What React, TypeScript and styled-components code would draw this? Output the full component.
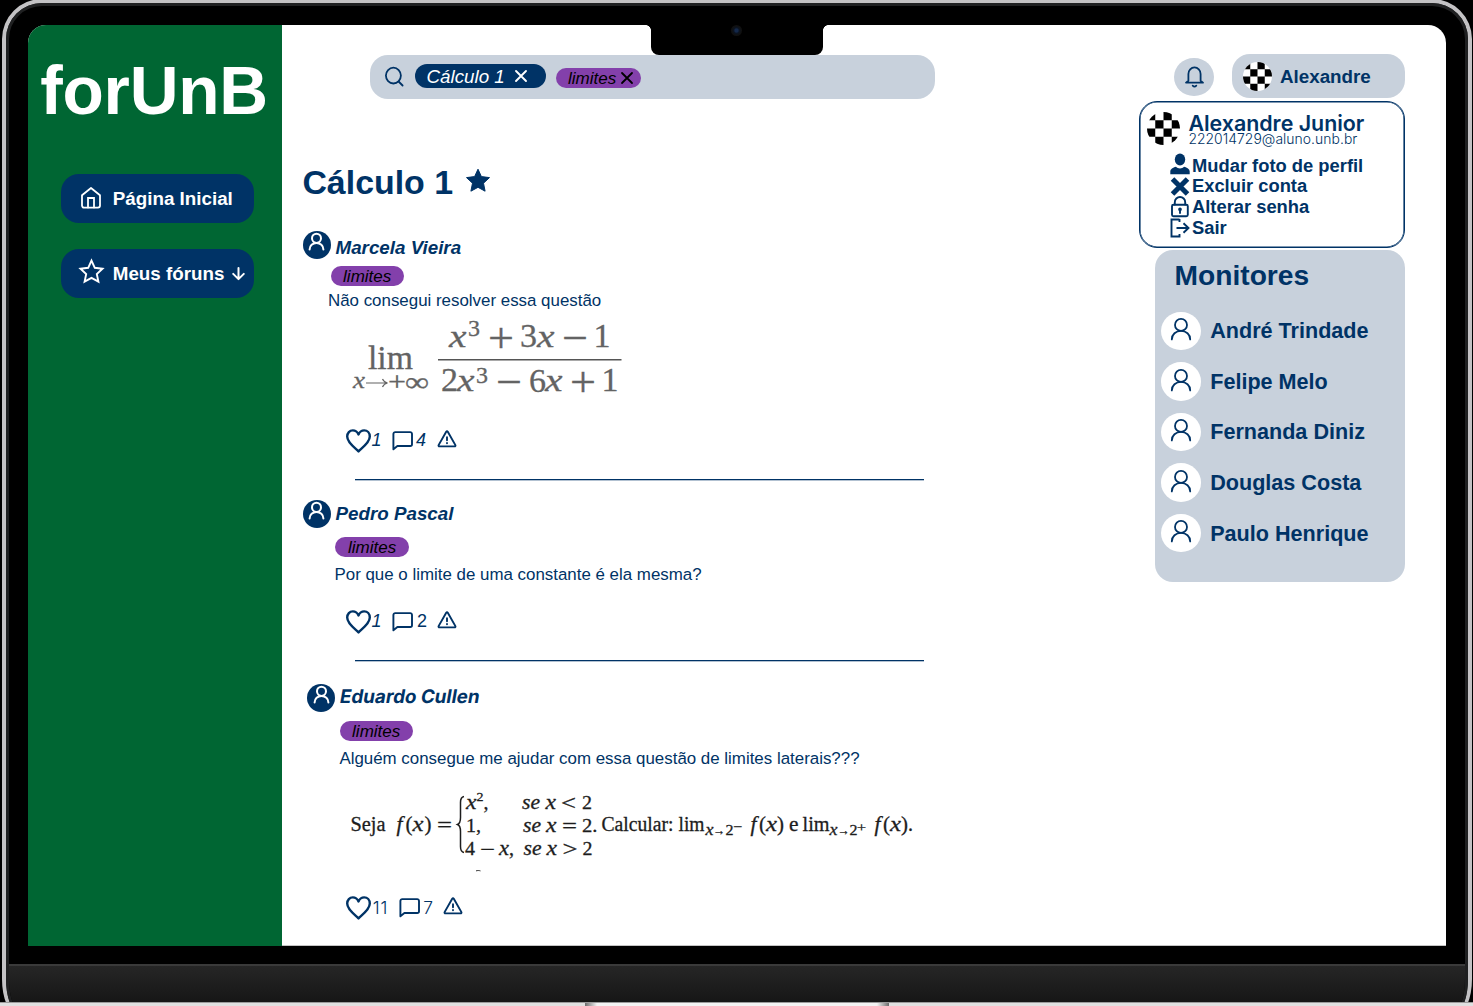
import React from "react";
import styled, { createGlobalStyle, css } from "styled-components";

const navy = "#003366";
const green = "#006633";
const mist = "#c8d1dc";
const purple = "#8340ab";
const sans = `"Liberation Sans", Arial, sans-serif`;
const inter = `Inter, "Liberation Sans", sans-serif`;

const Global = createGlobalStyle`
  * { box-sizing: border-box; }
  html, body { margin: 0; padding: 0; background: #000; overflow: hidden; }
  body { font-family: ${sans}; color: ${navy}; }
  svg { display: block; flex: none; overflow: visible; }
`;

/* ---------- laptop ---------- */

const Stage = styled.div`
  position: relative;
  width: 1473px;
  height: 1006px;
  overflow: hidden;
  background: #000;
  padding: 0 1px 0 2px;
`;
const Lid = styled.div`
  height: 1016px;
  margin-top: -1px;
  border: 4px solid #c3c2c4;
  border-radius: 40px 40px 16px 16px / 40px 40px 36px 36px;
  background: #1f2021;
`;
const Bezel = styled.div`
  height: 1008px;
  border: 3px solid #1f2021;
  border-radius: 36px 36px 12px 12px / 36px 36px 32px 32px;
  background: #000;
  overflow: hidden;
  display: flex;
  flex-direction: column;
`;
const Screen = styled.div`
  position: relative;
  display: flex;
  width: 1418px;
  height: 921px;
  flex: none;
  margin: 19px 0 0 19px;
  border-radius: 18px 18px 0 0;
  overflow: hidden;
  background: #fff;
`;
const Chin = styled.div`
  height: 44px;
  flex: none;
  margin-top: 18px;
  border-top: 2px solid #3a3a3a;
  background: linear-gradient(#262626, #151515 38px);
`;
const Base = styled.div`
  position: absolute;
  left: 0;
  right: 0;
  bottom: 0;
  height: 4px;
  border-top: 1px solid #9b9b9b;
  background: #e0e0e0;
  display: flex;
  justify-content: center;
`;
const Lip = styled.div`
  width: 304px;
  height: 4px;
  background: linear-gradient(90deg, #6b6b6b, #f3f3f3 12px, #f3f3f3 292px, #6b6b6b);
`;
const Notch = styled.div`
  position: absolute;
  top: 0;
  left: 622.7px;
  width: 172.6px;
  height: 29.5px;
  border-radius: 0 0 8px 8px;
  background: #000;
  display: flex;
  justify-content: center;
  &::before, &::after {
    content: "";
    position: absolute;
    top: 0;
    width: 5px;
    height: 5px;
  }
  &::before { left: -5px; background: radial-gradient(circle at 0 100%, transparent 4.5px, #000 5px); }
  &::after { right: -5px; background: radial-gradient(circle at 100% 100%, transparent 4.5px, #000 5px); }
`;
const Lens = styled.i`
  width: 11px;
  height: 11px;
  border-radius: 50%;
  background: radial-gradient(circle, #14284a 0 20%, #0a1322 35%, #101010 60%);
`;

/* ---------- sidebar ---------- */

const Sidebar = styled.aside`
  width: 254px;
  flex: none;
  background: ${green};
  padding-left: 12.3px;
`;
const Logo = styled.div`
  margin-top: 26px;
  height: 80px;
  font: bold 67.6px/80px ${sans};
  color: #fff;
  white-space: nowrap;
  letter-spacing: -0.25px;
`;
const Nav = styled.nav`
  margin: 43px 0 0 21px;
  display: flex;
  flex-direction: column;
  gap: 26.5px;
`;
const NavButton = styled.a<{ $lead: number }>`
  display: flex;
  align-items: center;
  width: 192.5px;
  height: 48.5px;
  border-radius: 18px;
  padding-left: ${(p) => p.$lead}px;
  background: ${navy};
  color: #fff;
  font: bold 18.8px/22px ${sans};
  white-space: nowrap;
`;
const NavLabel = styled.span<{ $gap: number }>`
  margin-left: ${(p) => p.$gap}px;
  margin-right: 8px;
  padding-top: 1px;
`;

/* ---------- centre column ---------- */

const Forum = styled.main`
  width: 857px;
  flex: none;
  padding-top: 30px;
  border-bottom: 1px solid #c4c4c4;
`;
const Search = styled.div`
  display: flex;
  align-items: flex-start;
  width: 565px;
  height: 43.5px;
  margin-left: 88px;
  padding: 9px 0 0 15px;
  border-radius: 18px;
  background: ${mist};
`;
const SearchGlyph = styled.span`
  padding: 3px 0 0;
  width: 30px;
`;
const CourseChip = styled.span`
  display: flex;
  align-items: center;
  gap: 10.3px;
  width: 131px;
  height: 23.5px;
  padding: 1px 0 0 11.5px;
  border-radius: 12px;
  background: ${navy};
  color: #fff;
  font: italic 18.8px/23px ${sans};
  white-space: nowrap;
`;
const TagChip = styled.span`
  display: flex;
  align-items: center;
  gap: 4.5px;
  width: 85px;
  height: 20px;
  margin: 4px 0 0 10px;
  padding: 0 0 0 12px;
  border-radius: 10px;
  background: ${purple};
  color: #000;
  font: italic 17px/21px ${sans};
`;
const TitleRow = styled.div`
  display: flex;
  margin: 63.5px 0 0 20.4px;
  gap: 11.5px;
  height: 41px;
`;
const Title = styled.h1`
  margin: 0;
  font: bold 33.9px/40px ${sans};
  white-space: nowrap;
`;
const StarBox = styled.span`
  padding-top: 5.5px;
`;
const Post = styled.article<{ $height: number; $shift: number }>`
  height: ${(p) => p.$height}px;
  padding-left: ${(p) => 20.6 + p.$shift}px;
`;
const Posts = styled.section`
  padding-top: 27.5px;
`;
const Author = styled.div`
  display: flex;
  height: 28px;
  gap: 4.9px;
`;
const AuthorIcon = styled.span`
  width: 28px;
  height: 28px;
  border-radius: 50%;
  background: ${navy};
  display: flex;
  justify-content: center;
  padding-top: 2.5px;
`;
const AuthorName = styled.span<{ $drop: number; $inter?: boolean }>`
  padding-top: ${(p) => p.$drop}px;
  font: italic bold 18.8px/22px ${sans};
  white-space: nowrap;
  ${(p) =>
    p.$inter &&
    css`
      font: bold 18.8px/22px ${inter};
      transform: skewX(-10deg);
    `}
`;
const Tag = styled.span<{ $top: number; $left: number }>`
  display: block;
  width: 73.2px;
  height: 20px;
  margin: ${(p) => p.$top}px 0 0 ${(p) => p.$left}px;
  border-radius: 10px;
  background: ${purple};
  color: #000;
  text-align: center;
  font: italic 17px/21px ${sans};
`;
const Body = styled.p<{ $top: number; $left: number }>`
  margin: ${(p) => p.$top}px 0 0 ${(p) => p.$left}px;
  height: 20px;
  font: 16.9px/20px ${sans};
  white-space: nowrap;
`;
const Figure = styled.div<{ $height: number; $left: number }>`
  height: ${(p) => p.$height}px;
  margin-left: ${(p) => p.$left}px;
`;
const Actions = styled.div<{ $left: number }>`
  display: flex;
  height: 24px;
  margin-left: ${(p) => p.$left}px;
`;
const Count = styled.span<{ $width: number; $pad: number; $italic?: boolean; $inter?: boolean }>`
  width: ${(p) => p.$width}px;
  padding-left: ${(p) => p.$pad}px;
  font: ${(p) => (p.$italic ? "italic" : "normal")} 18px/23px ${sans};
  ${(p) =>
    p.$inter &&
    css`
      font: 350 17.4px/23px ${inter};
      letter-spacing: 0.8px;
    `}
`;
const Rule = styled.hr<{ $top: number }>`
  width: 569px;
  height: 1px;
  margin: ${(p) => p.$top}px 0 0 52.4px;
  border: 0;
  background: ${navy};
  box-shadow: 0 1px rgba(0, 51, 102, 0.3);
`;

/* ---------- right column ---------- */

const Side = styled.div`
  flex: 1;
  padding: 29px 41px 0 0;
  border-bottom: 1px solid #c4c4c4;
`;
const UserBar = styled.div`
  display: flex;
  height: 44px;
  padding-left: 35px;
`;
const BellButton = styled.span`
  width: 40px;
  height: 38.5px;
  margin: 3.5px 18px 0 0;
  border-radius: 50%;
  background: ${mist};
  display: flex;
  justify-content: center;
  padding-top: 8.5px;
`;
const UserPill = styled.span`
  display: flex;
  align-items: center;
  gap: 8px;
  width: 172.5px;
  height: 44px;
  padding: 1px 0 0 11px;
  border-radius: 18px;
  background: ${mist};
  font: bold 18.8px/22px ${sans};
`;
const Menu = styled.div`
  height: 147px;
  margin-top: 3px;
  border: 1px solid ${navy};
  box-shadow: inset 0 0 0 0.6px ${navy};
  border-radius: 18px;
  background: #fff;
`;
const MenuHead = styled.div`
  display: flex;
  gap: 8.4px;
  height: 44px;
  padding: 9.5px 0 0 7px;
`;
const Identity = styled.div`
  display: flex;
  flex-direction: column;
`;
const FullName = styled.span`
  margin-top: 1px;
  font: 600 21.4px/20px ${inter};
  white-space: nowrap;
`;
const Mail = styled.span`
  margin-top: -0.5px;
  font: 350 13.9px/14px ${inter};
  letter-spacing: 0.05px;
  white-space: nowrap;
`;
const MenuList = styled.div`
  padding: 9px 0 0 30.4px;
`;
const MenuItem = styled.div`
  display: flex;
  align-items: center;
  height: 20.7px;
  gap: 1.6px;
  font: bold 18.35px/20.6px ${sans};
  white-space: nowrap;
`;
const MenuLabel = styled.span`
  padding-top: 1px;
`;
const Monitors = styled.section`
  width: 249.5px;
  height: 331.5px;
  margin: 2px 0 0 16px;
  padding-left: 5.5px;
  border-radius: 18px;
  background: ${mist};
`;
const MonitorsTitle = styled.h2`
  margin: 0;
  padding: 8px 0 0 14px;
  height: 61.5px;
  font: bold 28.2px/34px ${sans};
`;
const Monitor = styled.div`
  display: flex;
  height: 50.6px;
  gap: 9.7px;
`;
const MonitorIcon = styled.span`
  width: 40px;
  height: 38.5px;
  border-radius: 50%;
  background: #fff;
  display: flex;
  justify-content: center;
  padding-top: 6.5px;
`;
const MonitorName = styled.span`
  padding-top: 6.8px;
  font: bold 21.6px/26px ${sans};
  white-space: nowrap;
`;

/* ---------- icons ---------- */

const line = (w: number, color = "currentColor") => ({
  fill: "none",
  stroke: color,
  strokeWidth: w,
  strokeLinecap: "round" as const,
  strokeLinejoin: "round" as const,
});

const HomeIcon = () => (
  <svg width="20" height="22" viewBox="0 0 20 22" {...line(1.8)}>
    <path d="M1 8.2 10 1l9 7.2V18.6a2 2 0 0 1-2 2H3a2 2 0 0 1-2-2Z" />
    <path d="M7 20.4V11h6v9.4" strokeLinejoin="miter" />
  </svg>
);
const StarOutline = () => (
  <svg width="25" height="28" viewBox="0 0 25 28" {...line(1.9)} strokeLinejoin="miter">
    <path d="m12.5 1.6 3.3 7.2 7.7.9-5.7 5.3 1.6 7.6-6.9-3.8-6.9 3.8 1.6-7.6L1.5 9.7l7.7-.9Z" />
  </svg>
);
const ArrowDown = () => (
  <svg width="13" height="14" viewBox="0 0 13 14" {...line(2)}>
    <path d="M6.5 2v10.8M1.2 7.9l5.3 5.2 5.3-5.2" />
  </svg>
);
const SearchIcon = () => (
  <svg width="18" height="20" viewBox="0 0 18 20" {...line(1.8, navy)}>
    <ellipse cx="8.4" cy="8.6" rx="7.5" ry="7.9" />
    <path d="m13.6 14.5 4 4" />
  </svg>
);
const Cross = ({ size, width }: { size: number; width: number }) => (
  <svg width={size} height={size} viewBox="0 0 12 12" {...line(width)}>
    <path d="m1 1 10 10M11 1 1 11" />
  </svg>
);
const SolidStar = () => (
  <svg width="26" height="25" viewBox="0 0 26 25">
    <path
      d="m13 1.2 3.4 7.4 8.1 1-6 5.6 1.6 8L13 19.3l-7.1 3.9 1.6-8-6-5.6 8.1-1Z"
      fill={navy}
      stroke={navy}
      strokeWidth="1"
      strokeLinejoin="round"
    />
  </svg>
);
const Person = ({ w, h, color, stroke }: { w: number; h: number; color: string; stroke: number }) => (
  <svg width={w} height={h} viewBox="0 0 20 22" preserveAspectRatio="none" {...line(stroke, color)}>
    <circle cx="10" cy="6.9" r="6" />
    <path d="M.8 21.4c0-5 4.1-8.5 9.2-8.5s9.2 3.5 9.2 8.5" />
  </svg>
);
const Bell = () => (
  <svg width="19" height="22" viewBox="0 0 19 22" {...line(1.8, navy)}>
    <path d="M3.4 14.8V8a6.1 6.6 0 0 1 12.2 0v6.8l2.4 1.8H1Z" />
    <path d="M7.7 19.7c1 1 2.6 1 3.6 0" />
  </svg>
);
const Heart = () => (
  <svg width="25" height="24" viewBox="0 0 25 24" {...line(2.4, navy)}>
    <path d="M12.5 22.4C10 19.6 1.2 14 1.2 7.6c0-3.6 2.5-6.2 5.6-6.2 2.6 0 4.6 1.6 5.7 4 1.1-2.4 3.1-4 5.7-4 3.1 0 5.6 2.6 5.6 6.2 0 6.4-8.8 12-11.3 14.8Z" />
  </svg>
);
const Comment = () => (
  <svg width="21" height="22" viewBox="0 0 21 22" {...line(1.9, navy)}>
    <path d="M3.2 3.100h15a1.800 1.800 0 0 1 1.800 1.800v10.300a1.800 1.800 0 0 1-1.800 1.800H5.400L1.400 20.300V4.900a1.800 1.800 0 0 1 1.800-1.800Z" />
  </svg>
);
const Alert = () => (
  <svg width="20" height="20" viewBox="0 0 20 20" {...line(1.9, navy)}>
    <path d="M9.2 2.7a1 1 0 0 1 1.6 0L18.400 16.100a.9.9 0 0 1-.8 1.300H2.400a.9.9 0 0 1-.8-1.300Z" />
    <path d="M10 8.200v3M10 14v.3" />
  </svg>
);
const Checker = ({ size }: { size: number }) => (
  <svg width={size} height={size} viewBox="0 0 4 4">
    <clipPath id={`round${size}`}>
      <circle cx="2" cy="2" r="2" />
    </clipPath>
    <g clipPath={`url(#round${size})`}>
      <rect width="4" height="4" fill="#fff" />
      <path d="M0 0h1v1h1v1h1v1h1v1H3V3H2V2H1V1H0ZM2 0h1v1H2ZM3 1h1v1H3ZM0 2h1v1H0ZM1 3h1v1H1Z" fill="#000" />
    </g>
  </svg>
);
const UserSolid = () => (
  <svg width="20" height="22" viewBox="0 0 20 22" fill={navy}>
    <ellipse cx="10" cy="5.6" rx="5.2" ry="6" />
    <path d="M.3 20.3v-2.800c0-2.400 2.600-4.200 5.700-4.800 2 2.300 6 2.300 8 0 3.100.6 5.700 2.400 5.700 4.800v2.800Z" />
  </svg>
);
const HeavyCross = () => (
  <svg width="20" height="20" viewBox="0 0 20 20" fill="none" stroke={navy} strokeWidth="5">
    <path d="m2.500 3 15 15M17.500 3l-15 15" />
  </svg>
);
const Lock = () => (
  <svg width="20" height="22" viewBox="0 0 20 22" {...line(1.9, navy)}>
    <rect x="2" y="8.700" width="15.800" height="11.600" rx="1.500" />
    <path d="M4.800 8.500V6.200a5.200 5.200 0 0 1 10.400 0v2.300M10 13.500v3.500" />
    <circle cx="10" cy="13.300" r=".9" />
  </svg>
);
const Exit = () => (
  <svg width="20" height="20" viewBox="0 0 20 20" {...line(1.9, navy)} strokeLinejoin="miter" strokeLinecap="butt">
    <path d="M9.500 2.500H1.500v17h8v-2.500M9.500 2v3M6.500 11H18M13.500 6.200l5 4.800-5 4.800" />
  </svg>
);

/* ---------- formulas ---------- */

const Glyphs = styled.text<{ $size: number; $italic?: boolean }>`
  font-family: "Liberation Serif", "Times New Roman", serif;
  font-size: ${(p) => p.$size}px;
  font-style: ${(p) => (p.$italic ? "italic" : "normal")};
`;

type Piece = [string, number, number, number, number, boolean?];

const Pieces = ({ items }: { items: Piece[] }) => (
  <>
    {items.map(([s, x, y, size, w, italic], i) => (
      <Glyphs key={i} x={x} y={y} $size={size} $italic={italic} textLength={w} lengthAdjust="spacingAndGlyphs">
        {s}
      </Glyphs>
    ))}
  </>
);

const rational: Piece[] = [
  ["x", 449, 346.5, 32, 17.5, true],
  ["3", 468, 336, 23, 12],
  ["+", 488, 351.5, 42, 26],
  ["3", 520, 347, 34, 17],
  ["x", 537, 346.5, 32, 17.5, true],
  ["−", 562, 351.5, 42, 26],
  ["1", 593.5, 346.5, 34, 17],
  ["2", 441, 391, 34, 17],
  ["x", 457, 391, 32, 17.5, true],
  ["3", 476, 382.5, 23, 12],
  ["−", 496, 395.5, 42, 26],
  ["6", 529, 391.5, 34, 17],
  ["x", 545, 391, 32, 17.5, true],
  ["+", 570, 395.5, 42, 26],
  ["1", 601.5, 391, 34, 17],
  ["lim", 368, 368.5, 33, 45],
  ["x", 353, 387.5, 23, 12, true],
  ["+", 388, 391, 27, 18],
  ["∞", 405, 390.5, 27, 24],
];

const RationalLimit = () => (
  <svg width="280" height="90" viewBox="345 315 280 90" fill="#636363">
    <g stroke="#636363" strokeWidth="0.3">
      <Pieces items={rational} />
    </g>
    <path d="M438 359.8h183.5" stroke="#555" strokeWidth="1.4" />
    <path d="M366 383h20.5M382.5 379c1 2.300 2.500 3.500 5 4-2.500.5-4 1.700-5 4" fill="none" stroke="#636363" strokeWidth="1.2" />
  </svg>
);

const piecewise: Piece[] = [
  ["Seja", 350.5, 830, 20, 35],
  ["f", 396.5, 830, 20, 6, true],
  ["(", 405.5, 830, 21, 7],
  ["x", 412.5, 830, 21, 11, true],
  [")", 424.5, 830, 21, 7],
  ["=", 437, 831, 21, 15],
  ["x", 466, 808, 21, 10.5, true],
  ["2", 476.5, 800, 13, 7],
  [",", 483.5, 808, 20, 5],
  ["se", 522, 808, 20, 18, true],
  ["x", 545.5, 808, 21, 10.5, true],
  ["<", 561, 809, 20, 15],
  ["2", 582, 808, 19.5, 10],
  ["1,", 466, 830.5, 19.5, 15],
  ["se", 523, 830.5, 20, 18, true],
  ["x", 546, 830.5, 21, 10.5, true],
  ["=", 562, 831.5, 20, 15],
  ["2.", 582, 830.5, 19.5, 15.5],
  ["4", 465, 854, 19.5, 10],
  ["−", 480, 855, 20, 15],
  ["x", 499, 854, 21, 10, true],
  [",", 509, 854, 20, 5],
  ["se", 523.5, 854, 20, 18, true],
  ["x", 546.5, 854, 21, 10.5, true],
  [">", 562.5, 855, 20, 15],
  ["2", 582.5, 854, 19.5, 10],
  ["Calcular:", 601.5, 829.5, 20, 72],
  ["lim", 678.5, 829.5, 20, 26],
  ["x", 705.5, 833.5, 16, 8, true],
  ["→", 713, 833.5, 14, 12],
  ["2", 725.5, 833.5, 14, 8],
  ["−", 733, 830, 13, 9],
  ["f", 750.5, 829.5, 20, 6, true],
  ["(", 759, 829.5, 21, 7],
  ["x", 766, 829.5, 21, 11, true],
  [")", 777, 829.5, 21, 7],
  ["e", 789, 829.5, 20, 9.5],
  ["lim", 802.5, 829.5, 20, 27],
  ["x", 829.5, 833.5, 16, 8, true],
  ["→", 837.5, 833.5, 14, 12],
  ["2", 849.5, 833.5, 14, 8],
  ["+", 857, 830.5, 13, 9],
  ["f", 874.5, 829.5, 20, 6, true],
  ["(", 883, 829.5, 21, 7],
  ["x", 890, 829.5, 21, 11, true],
  [")", 901, 829.5, 21, 7],
  [".", 908, 829.5, 20, 5],
];

const PiecewiseLimit = () => (
  <svg width="570" height="90" viewBox="345 785 570 90" fill="#1d1d1d" stroke="#1d1d1d" strokeWidth="0.3">
    <Pieces items={piecewise} />
    <path
      d="M464 795.5c-3 .5-3.500 2.500-3.500 6v15c0 4-.5 6-3 7 2.500 1 3 3 3 7v15c0 3.500.5 5.500 3.500 6"
      fill="none"
      strokeWidth="1.5"
    />
    <path d="M476 869.900c1.500-.5 3-.5 4.500 0" fill="none" strokeWidth=".9" />
  </svg>
);

/* ---------- page ---------- */

const monitors = ["André Trindade", "Felipe Melo", "Fernanda Diniz", "Douglas Costa", "Paulo Henrique"];

const options = [
  { icon: <UserSolid />, label: "Mudar foto de perfil" },
  { icon: <HeavyCross />, label: "Excluir conta" },
  { icon: <Lock />, label: "Alterar senha" },
  { icon: <Exit />, label: "Sair" },
];

export default function App() {
  return (
    <>
      <Global />
      <Stage>
        <Lid>
          <Bezel>
            <Screen>
              <Sidebar>
                <Logo>forUnB</Logo>
                <Nav>
                  <NavButton $lead={19.6}>
                    <HomeIcon />
                    <NavLabel $gap={11.9}>Página Inicial</NavLabel>
                  </NavButton>
                  <NavButton $lead={17.6}>
                    <StarOutline />
                    <NavLabel $gap={8.9}>Meus fóruns</NavLabel>
                    <ArrowDown />
                  </NavButton>
                </Nav>
              </Sidebar>

              <Forum>
                <Search>
                  <SearchGlyph>
                    <SearchIcon />
                  </SearchGlyph>
                  <CourseChip>
                    Cálculo 1 <Cross size={12} width={1.9} />
                  </CourseChip>
                  <TagChip>
                    limites <Cross size={12} width={1.8} />
                  </TagChip>
                </Search>

                <TitleRow>
                  <Title>Cálculo 1</Title>
                  <StarBox>
                    <SolidStar />
                  </StarBox>
                </TitleRow>

                <Posts>
                  <Post $height={269} $shift={0}>
                    <Author>
                      <AuthorIcon>
                        <Person w={15} h={17} color="#fff" stroke={2.7} />
                      </AuthorIcon>
                      <AuthorName $drop={6}>Marcela Vieira</AuthorName>
                    </Author>
                    <Tag $top={7} $left={28}>limites</Tag>
                    <Body $top={5.5} $left={25.4}>Não consegui resolver essa questão</Body>
                    <Figure $height={117.5} $left={42.4}>
                      <Figure $height={3.5} $left={0} />
                      <RationalLimit />
                    </Figure>
                    <Actions $left={43.4}>
                      <Heart />
                      <Count $width={21} $pad={0.5} $italic>1</Count>
                      <Comment />
                      <Count $width={24} $pad={3} $italic>4</Count>
                      <Alert />
                    </Actions>
                    <Rule $top={26} />
                  </Post>

                  <Post $height={184} $shift={0}>
                    <Author>
                      <AuthorIcon>
                        <Person w={15} h={17} color="#fff" stroke={2.7} />
                      </AuthorIcon>
                      <AuthorName $drop={3}>Pedro Pascal</AuthorName>
                    </Author>
                    <Tag $top={9} $left={32.9}>limites</Tag>
                    <Body $top={8.5} $left={31.9}>Por que o limite de uma constante é ela mesma?</Body>
                    <Figure $height={25} $left={0} />
                    <Actions $left={43.4}>
                      <Heart />
                      <Count $width={21} $pad={0.5} $italic>1</Count>
                      <Comment />
                      <Count $width={24} $pad={4}>2</Count>
                      <Alert />
                    </Actions>
                    <Rule $top={25.5} />
                  </Post>

                  <Post $height={240} $shift={4.5}>
                    <Author>
                      <AuthorIcon>
                        <Person w={15} h={17} color="#fff" stroke={2.7} />
                      </AuthorIcon>
                      <AuthorName $drop={2} $inter>Eduardo Cullen</AuthorName>
                    </Author>
                    <Tag $top={9} $left={32.5}>limites</Tag>
                    <Body $top={8} $left={32.3}>Alguém consegue me ajudar com essa questão de limites laterais???</Body>
                    <Figure $height={127} $left={37.9}>
                      <Figure $height={17} $left={0} />
                      <PiecewiseLimit />
                    </Figure>
                    <Actions $left={38.9}>
                      <Heart />
                      <Count $width={27.8} $pad={1.8} $inter>11</Count>
                      <Comment />
                      <Count $width={23.5} $pad={3.5} $inter>7</Count>
                      <Alert />
                    </Actions>
                  </Post>
                </Posts>
              </Forum>

              <Side>
                <UserBar>
                  <BellButton>
                    <Bell />
                  </BellButton>
                  <UserPill>
                    <Checker size={29} />
                    Alexandre
                  </UserPill>
                </UserBar>
                <Menu>
                  <MenuHead>
                    <Checker size={33} />
                    <Identity>
                      <FullName>Alexandre Junior</FullName>
                      <Mail>222014729@aluno.unb.br</Mail>
                    </Identity>
                  </MenuHead>
                  <MenuList>
                    {options.map((o) => (
                      <MenuItem key={o.label}>
                        {o.icon}
                        <MenuLabel>{o.label}</MenuLabel>
                      </MenuItem>
                    ))}
                  </MenuList>
                </Menu>
                <Monitors>
                  <MonitorsTitle>Monitores</MonitorsTitle>
                  {monitors.map((name) => (
                    <Monitor key={name}>
                      <MonitorIcon>
                        <Person w={20} h={22} color={navy} stroke={1.8} />
                      </MonitorIcon>
                      <MonitorName>{name}</MonitorName>
                    </Monitor>
                  ))}
                </Monitors>
              </Side>

              <Notch>
                <Lens />
              </Notch>
            </Screen>
            <Chin />
          </Bezel>
        </Lid>
        <Base>
          <Lip />
        </Base>
      </Stage>
    </>
  );
}
